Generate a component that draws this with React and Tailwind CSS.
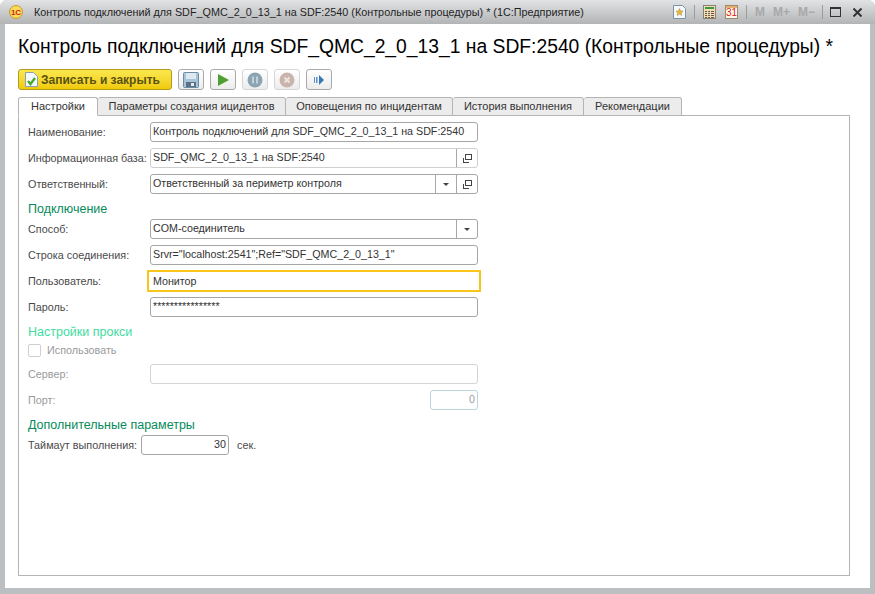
const tabs = [
  { label: 'Настройки', w: 'w-[80px]', active: true },
  { label: 'Параметры создания ицидентов', w: 'w-[188px]' },
  { label: 'Оповещения по инцидентам', w: 'w-[167px]' },
  { label: 'История выполнения', w: 'w-[131px]' },
  { label: 'Рекомендации', w: 'w-[98px]' },
];

const OpenIcon = () => (
  <svg width="11" height="11" viewBox="0 0 11 11" fill="none" stroke="#444" strokeWidth="1" shapeRendering="crispEdges">
    <rect x="3.5" y="1.5" width="6" height="5" />
    <path d="M1.5 4.5v5h5" />
  </svg>
);

const FieldButton = ({ children }) => (
  <div className="flex h-full w-[21px] shrink-0 items-center justify-center border-l border-[#a8a8a8]">{children}</div>
);

const Arrow = () => <div className="h-0 w-0 border-x-[3px] border-t-[3px] border-x-transparent border-t-[#444]" />;

const Field = ({ w = 'w-[328px]', tone = 'border-[#a6a6a6]', text, children, right, textTone = 'text-[#333]' }) => (
  <div className={`flex h-[20px] items-center overflow-hidden rounded-[3px] border bg-white ${w} ${tone}`}>
    <div className={`-mt-px min-w-0 flex-1 truncate px-[2px] text-[10.7px] ${right ? 'text-right' : ''} ${textTone}`}>{text}</div>
    {children}
  </div>
);

const Row = ({ label, children, tone = 'text-[#4a4a4a]' }) => (
  <div className="mt-[6px] flex h-[20px] items-center">
    <div className={`w-[122px] shrink-0 text-[10.8px] ${tone}`}>{label}</div>
    {children}
  </div>
);

const Heading = ({ children, tone = 'text-[#068a5a]', className = '' }) => (
  <div className={`h-[14px] text-[12.5px] leading-[14px] ${tone} ${className}`}>{children}</div>
);

const ToolButton = ({ children, tone = 'border-[#a9a9a9]' }) => (
  <div className={`flex h-[21px] w-[26px] items-center justify-center rounded-[3px] border bg-gradient-to-b from-white to-[#ececec] ${tone}`}>
    {children}
  </div>
);

export default function App() {
  return (
    <div className="h-[594px] w-[875px] overflow-hidden bg-white font-['Liberation_Sans',Arial,sans-serif]">
      <div className="flex h-full flex-col rounded-t-[7px] bg-[#bcbfc1] px-[5px] pb-[6px]">
        {/* title bar */}
        <div className="-mx-[5px] flex h-[24px] shrink-0 items-center rounded-t-[7px] bg-gradient-to-b from-[#e2e3e4] to-[#b2b4b6] pl-[9px] pr-[13px]">
          <svg width="14" height="14" viewBox="0 0 14 14">
            <circle cx="7" cy="7" r="6.5" fill="#f8da58" stroke="#c89a2a" />
            <text x="7" y="10" textAnchor="middle" fontSize="8" fontWeight="700" fill="#d0241c" fontFamily="Liberation Sans">1С</text>
          </svg>
          <div className="ml-[11px] text-[10.8px] text-[#1f1f1f]">Контроль подключений для SDF_QMC_2_0_13_1 на SDF:2540 (Контрольные процедуры) * (1С:Предприятие)</div>
          <div className="ml-auto flex items-center">
            <svg width="13" height="14" viewBox="0 0 13 14">
              <path d="M.5.5h9l3 3v10H.5z" fill="#f4f8fb" stroke="#7c93a8" />
              <path d="M6.500 3.500l1.100 2.400 2.500.3-1.900 1.700.5 2.500-2.200-1.300-2.200 1.300.5-2.500L3 6.200l2.500-.3z" fill="#e8b93a" stroke="#a8842a" strokeWidth=".5" />
            </svg>
            <div className="mx-[8px] h-[14px] w-px bg-[#9a9c9e]" />
            <svg width="13" height="14" viewBox="0 0 13 14" shapeRendering="crispEdges">
              <rect x=".5" y=".5" width="12" height="13" fill="#f0dcb8" stroke="#8a8070" />
              <rect x="2" y="2" width="9" height="2" fill="#3a9a3a" />
              <path d="M2 6h2M5 6h2M8 6h3M2 8h2M5 8h2M8 8h3M2 10h2M5 10h2M8 10h3M2 12h2M5 12h2M8 12h3" stroke="#6a5a40" />
            </svg>
            <div className="ml-[9px] flex h-[14px] w-[13px] flex-col border border-[#9a8a70] bg-[#fdf6e8]">
              <div className="h-[3px] bg-[#e8b070]" />
              <div className="text-center text-[10px] leading-[10px] text-[#d8241c]">31</div>
            </div>
            <div className="mx-[8px] h-[14px] w-px bg-[#9a9c9e]" />
            <div className="flex gap-[8px] text-[12px] font-bold text-[#a8a8a8]">
              <span>M</span>
              <span>M+</span>
              <span>M−</span>
            </div>
            <div className="mx-[7px] h-[14px] w-px bg-[#9a9c9e]" />
            <div className="h-[10px] w-[11px] border border-t-2 border-[#333]" />
            <svg className="ml-[12px]" width="9" height="9" viewBox="0 0 9 9" stroke="#333" strokeWidth="2">
              <path d="M.5.5l8 8M8.500.5l-8 8" />
            </svg>
          </div>
        </div>

        {/* content */}
        <div className="flex min-h-0 flex-1 flex-col bg-white pb-[12px] pl-[13px] pr-[20px]">
          <div className="mt-[12px] h-[22px] whitespace-nowrap text-[19.3px] leading-[22px] text-black">
            Контроль подключений для SDF_QMC_2_0_13_1 на SDF:2540 (Контрольные процедуры) *
          </div>

          <div className="mt-[11px] flex h-[21px] gap-[6px]">
            <div className="flex w-[154px] items-center gap-[3px] rounded-[3px] border border-[#b39a1c] bg-gradient-to-b from-[#fbe84c] to-[#f0cb00] pl-[6px]">
              <svg width="13" height="15" viewBox="0 0 13 15">
                <path d="M.5.5h8l4 4v10H.5z" fill="#f4f9fb" stroke="#8aa0b0" />
                <path d="M3 9l2.500 3L10 6" fill="none" stroke="#4aa82a" strokeWidth="2.400" />
              </svg>
              <span className="text-[12px] font-bold text-[#5a5210]">Записать и закрыть</span>
            </div>
            <ToolButton>
              <svg width="16" height="16" viewBox="0 0 16 16">
                <rect x=".5" y=".5" width="15" height="15" rx="1" fill="#a8c4d8" stroke="#6c8aa2" />
                <rect x="3" y="1" width="10" height="6" fill="#dfe9f0" />
                <rect x="3" y="10" width="10" height="5" fill="#5d7084" />
                <rect x="8" y="11" width="3" height="3" fill="#e4ecf2" />
              </svg>
            </ToolButton>
            <ToolButton>
              <svg width="11" height="12" viewBox="0 0 11 12"><path d="M0 0l11 6-11 6z" fill="#4f9e32" /></svg>
            </ToolButton>
            <ToolButton tone="border-[#d6d6d6]">
              <svg width="16" height="16" viewBox="0 0 16 16">
                <circle cx="8" cy="8" r="7.500" fill="#8ba3b3" />
                <path d="M6 4.500v7M10 4.500v7" stroke="#c3d0d8" strokeWidth="2" />
              </svg>
            </ToolButton>
            <ToolButton tone="border-[#d6d6d6]">
              <svg width="16" height="16" viewBox="0 0 16 16">
                <circle cx="8" cy="8" r="7.500" fill="#c9b4ac" />
                <path d="M5.500 5.500l5 5M10.500 5.500l-5 5" stroke="#eee3de" strokeWidth="2" />
              </svg>
            </ToolButton>
            <ToolButton>
              <svg width="12" height="10" viewBox="0 0 12 10">
                <path d="M1 2h1v6H1zM3 2h1.500v6H3z" fill="#5d93c8" />
                <path d="M6 0l5 5-5 5z" fill="#3a76b4" />
              </svg>
            </ToolButton>
          </div>

          {/* tabs */}
          <div className="relative z-10 mt-[7px] flex h-[19px] shrink-0">
            {tabs.map((t) => (
              <div
                key={t.label}
                className={`flex h-[19px] items-center justify-center rounded-t-[3px] border border-l-0 border-[#b4b4b4] text-[11px] text-[#333] first:border-l ${t.w} ${t.active ? 'border-b-white bg-white' : 'bg-[#ececec]'}`}
              >
                {t.label}
              </div>
            ))}
          </div>

          <div className="-mt-px flex min-h-0 flex-1 flex-col border border-[#b4b4b4] pl-[9px]">
            <Row label="Наименование:">
              <Field text="Контроль подключений для SDF_QMC_2_0_13_1 на SDF:2540" />
            </Row>
            <Row label="Информационная база:">
              <Field text="SDF_QMC_2_0_13_1 на SDF:2540" tone="border-[#cfcfcf]">
                <FieldButton><OpenIcon /></FieldButton>
              </Field>
            </Row>
            <Row label="Ответственный:">
              <Field text="Ответственный за периметр контроля">
                <FieldButton><Arrow /></FieldButton>
                <FieldButton><OpenIcon /></FieldButton>
              </Field>
            </Row>
            <Heading className="mt-[8px] -mb-[3px]">Подключение</Heading>
            <Row label="Способ:">
              <Field text="COM-соединитель">
                <FieldButton><Arrow /></FieldButton>
              </Field>
            </Row>
            <Row label="Строка соединения:">
              <Field text='Srvr="localhost:2541";Ref="SDF_QMC_2_0_13_1"' />
            </Row>
            <Row label="Пользователь:">
              <div className="-ml-[3px] flex h-[22px] w-[334px] items-center border-2 border-[#f8c51c] bg-white px-[4px] text-[10.7px] text-[#333]">Монитор</div>
            </Row>
            <Row label="Пароль:">
              <Field text="****************" />
            </Row>
            <Heading tone="text-[#3fdca0]" className="mt-[8px]">Настройки прокси</Heading>
            <div className="mb-px mt-[5px] flex h-[13px] items-center">
              <div className="h-[13px] w-[13px] rounded-[2px] border border-[#cfcfcf] bg-white" />
              <span className="ml-[6px] text-[10.8px] text-[#9a9a9a]">Использовать</span>
            </div>
            <Row label="Сервер:" tone="text-[#9a9a9a]">
              <Field tone="border-[#d4d4d4]" />
            </Row>
            <Row label="Порт:" tone="text-[#9a9a9a]">
              <div className="ml-[280px]">
                <Field w="w-[48px]" tone="border-[#b9d4de]" text="0" right textTone="text-[#9a9a9a]" />
              </div>
            </Row>
            <Heading className="mt-[8px]">Дополнительные параметры</Heading>
            <div className="mt-[3px] flex h-[20px] items-center">
              <span className="w-[113px] shrink-0 whitespace-nowrap text-[10.8px] text-[#4a4a4a]">Таймаут выполнения:</span>
              <Field w="w-[88px]" text="30" right />
              <span className="ml-[8px] text-[10.8px] text-[#4a4a4a]">сек.</span>
            </div>
          </div>
        </div>
      </div>
    </div>
  );
}
